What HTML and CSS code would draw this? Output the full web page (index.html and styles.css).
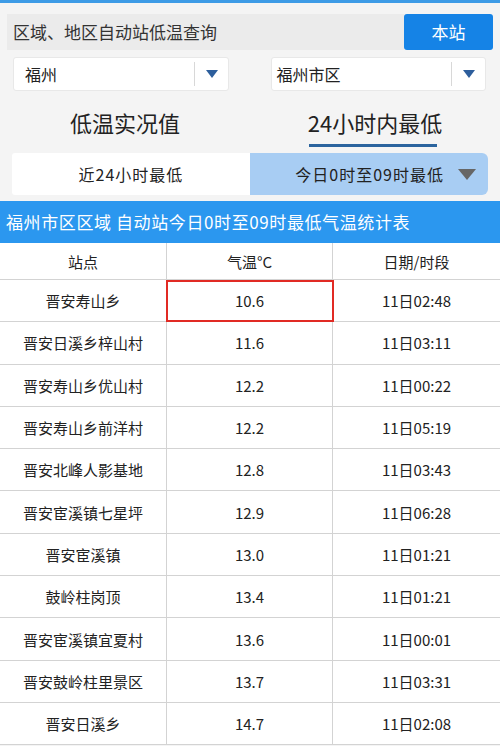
FILE: index.html
```html
<!DOCTYPE html>
<html lang="zh">
<head>
<meta charset="utf-8">
<link rel="stylesheet" href="styles.css">
</head>
<body>
<div class="topline"></div>
<div class="search">
  <div class="search-input">区域、地区自动站低温查询</div>
  <div class="search-btn">本站</div>
</div>
<div class="selects">
  <div class="select"><span class="sel-text">福州</span><span class="sel-div"></span><span class="sel-arrow"></span></div>
  <div class="select"><span class="sel-text">福州市区</span><span class="sel-div"></span><span class="sel-arrow"></span></div>
</div>
<div class="tabs">
  <div class="tab">低温实况值</div>
  <div class="tab active">24小时内最低</div>
</div>
<div class="subtabs">
  <div class="subtab">近24小时最低</div>
  <div class="subtab on">今日0时至09时最低<span class="sub-arrow"></span></div>
</div>
<div class="titlebar">福州市区区域 自动站今日0时至09时最低气温统计表</div>
<div class="table">
  <div class="row head"><div class="c">站点</div><div class="c">气温°C</div><div class="c">日期/时段</div></div>
  <div class="row"><div class="c">晋安寿山乡</div><div class="c mark">10.6</div><div class="c">11日02:48</div></div>
  <div class="row"><div class="c">晋安日溪乡梓山村</div><div class="c">11.6</div><div class="c">11日03:11</div></div>
  <div class="row"><div class="c">晋安寿山乡优山村</div><div class="c">12.2</div><div class="c">11日00:22</div></div>
  <div class="row"><div class="c">晋安寿山乡前洋村</div><div class="c">12.2</div><div class="c">11日05:19</div></div>
  <div class="row"><div class="c">晋安北峰人影基地</div><div class="c">12.8</div><div class="c">11日03:43</div></div>
  <div class="row"><div class="c">晋安宦溪镇七星坪</div><div class="c">12.9</div><div class="c">11日06:28</div></div>
  <div class="row"><div class="c">晋安宦溪镇</div><div class="c">13.0</div><div class="c">11日01:21</div></div>
  <div class="row"><div class="c">鼓岭柱岗顶</div><div class="c">13.4</div><div class="c">11日01:21</div></div>
  <div class="row"><div class="c">晋安宦溪镇宜夏村</div><div class="c">13.6</div><div class="c">11日00:01</div></div>
  <div class="row"><div class="c">晋安鼓岭柱里景区</div><div class="c">13.7</div><div class="c">11日03:31</div></div>
  <div class="row"><div class="c">晋安日溪乡</div><div class="c">14.7</div><div class="c">11日02:08</div></div>
</div>
</body>
</html>
```
FILE: styles.css
```css
html, body {
  margin: 0;
  padding: 0;
}
body {
  width: 500px;
  height: 746px;
  overflow: hidden;
  background: #f4f4f4;
  font-family: "Noto Sans CJK SC", "Noto Sans", sans-serif;
  color: #222;
}
.topline {
  height: 3px;
  background: #3d9be6;
}
.search {
  display: flex;
  margin: 11px 7px 0 7px;
  height: 36px;
}
.search-input {
  flex: 1;
  background: #ebebeb;
  font-size: 17px;
  line-height: 36px;
  padding-left: 6px;
  color: #333;
}
.search-btn {
  width: 89px;
  background: #1583e6;
  color: #fff;
  font-size: 17px;
  line-height: 36px;
  text-align: center;
  border-radius: 3px;
}
.selects {
  display: flex;
  gap: 42px;
  margin: 7px 14px 0 13px;
}
.select {
  flex: 1;
  height: 34px;
  background: #fff;
  border-radius: 3px;
  border: 1px solid #e8e8e8;
  box-sizing: border-box;
  display: flex;
  align-items: center;
}
.sel-text {
  flex: 1;
  font-size: 16px;
  padding-left: 5px;
  color: #222;
}
.select:first-child .sel-text {
  padding-left: 11px;
}
.sel-div {
  width: 1px;
  height: 24px;
  background: #d8d8d8;
}
.sel-arrow {
  width: 0;
  height: 0;
  border-left: 6px solid transparent;
  border-right: 6px solid transparent;
  border-top: 8px solid #2d5e9c;
  margin: 0 10px 0 11px;
}
.tabs {
  display: flex;
  padding-top: 16px;
}
.tab {
  flex: 1;
  text-align: center;
  font-size: 22px;
  line-height: 30px;
  color: #222;
}
.tab.active::after {
  content: "";
  display: block;
  width: 128px;
  height: 3px;
  background: #2b649e;
  margin: 7px auto 0 auto;
  position: relative;
  left: -2px;
}
.subtabs {
  display: flex;
  margin: 6px 12px 0 12px;
  height: 42px;
}
.subtab {
  flex: 0 0 50%;
  box-sizing: border-box;
  background: #fff;
  font-size: 16px;
  letter-spacing: 1px;
  line-height: 42px;
  text-align: center;
  color: #222;
  border-radius: 3px 0 0 3px;
}
.subtab.on {
  background: #a8cdf3;
  border-radius: 0 6px 6px 0;
  padding-right: 12px;
  display: flex;
  align-items: center;
  justify-content: flex-end;
}
.sub-arrow {
  width: 0;
  height: 0;
  border-left: 9px solid transparent;
  border-right: 9px solid transparent;
  border-top: 11px solid #666;
  margin-left: 14px;
}
.titlebar {
  margin-top: 6px;
  height: 42px;
  background: #2b97ef;
  color: #fff;
  font-size: 17px;
  letter-spacing: 0.6px;
  line-height: 42px;
  padding-left: 6px;
}
.table {
  background: #fff;
}
.row {
  display: grid;
  grid-template-columns: 167px 166px 167px;
  height: 42.3px;
  box-sizing: border-box;
  border-bottom: 1.5px solid #d3d3d3;
}
.row.head {
  height: 37px;
}
.c {
  display: flex;
  align-items: center;
  justify-content: center;
  font-size: 15px;
  color: #222;
  border-right: 1.5px solid #d3d3d3;
  position: relative;
}
.c:last-child {
  border-right: none;
}
.mark::after {
  content: "";
  position: absolute;
  left: -1px;
  right: -2px;
  top: 0;
  bottom: -1px;
  border: 2px solid #e12a24;
}
```
